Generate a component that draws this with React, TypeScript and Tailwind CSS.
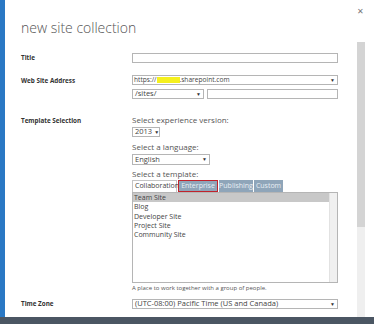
import React from "react";

const font = { fontFamily: '"Open Sans", "Noto Sans", sans-serif' };

function Caret() {
  return <span className="text-[5px] leading-none text-[#333]">▼</span>;
}

function SelectBox({ className, children }: { className: string; children: React.ReactNode }) {
  return (
    <div className={"flex items-center justify-between gap-[2px] border border-[#b5b5b5] bg-white pl-[2px] pr-[2px] " + className}>
      <span className="whitespace-nowrap text-[7.5px] leading-none text-[#444]">{children}</span>
      <Caret />
    </div>
  );
}

export default function App() {
  const templates = ["Team Site", "Blog", "Developer Site", "Project Site", "Community Site"];

  return (
    <div className="flex h-[324px] w-[374px] flex-col overflow-hidden bg-white" style={font}>
      <div className="flex flex-1">
        <div className="w-[5px] bg-[#2a78c4]" />
        <div className="flex flex-1 flex-col">
          <div className="flex h-[16px] justify-end pr-[10px] pt-[7px]">
            <span className="text-[8px] leading-none text-[#777]">✕</span>
          </div>
          <div className="flex flex-1">
            <div className="flex w-[347px] flex-col pl-[16px]">
              <h1 className="mt-[4px] text-[14px] font-light leading-[15px] text-[#555]">new site collection</h1>

              {/* Title */}
              <div className="mt-[18px] flex items-center">
                <div className="w-[111px] text-[6.3px] font-bold text-[#333]">Title</div>
                <div className="h-[10px] w-[206px] border border-[#b5b5b5]" />
              </div>

              {/* Web site address */}
              <div className="mt-[12px] flex">
                <div className="w-[111px] pt-[1px] text-[6.3px] font-bold text-[#333]">Web Site Address</div>
                <div className="flex w-[206px] flex-col gap-[4px]">
                  <div className="flex h-[10px] items-center justify-between border border-[#b5b5b5] pl-[1px] pr-[2px]">
                    <span className="flex items-center text-[6.6px] leading-none text-[#444]">
                      https://
                      <span className="inline-block h-[6px] w-[23px] bg-[#f5f01e]" />
                      .sharepoint.com
                    </span>
                    <Caret />
                  </div>
                  <div className="flex gap-[3px]">
                    <SelectBox className="h-[10px] w-[72px]">/sites/</SelectBox>
                    <div className="h-[10px] flex-1 border border-[#b5b5b5]" />
                  </div>
                </div>
              </div>

              {/* Template selection */}
              <div className="mt-[17px] flex">
                <div className="w-[111px] text-[6.3px] font-bold text-[#333]">Template Selection</div>
                <div className="flex w-[206px] flex-col text-[7px] text-[#555]">
                  <div className="text-[8px] leading-none">Select experience version:</div>
                  <SelectBox className="mt-[3px] h-[10px] w-[28px]">2013</SelectBox>
                  <div className="mt-[6px] text-[8px] leading-none">Select a language:</div>
                  <SelectBox className="mt-[3px] h-[11px] w-[78px]">English</SelectBox>
                  <div className="mt-[5px] text-[8px] leading-none">Select a template:</div>
                  <div className="mt-[2px] flex h-[12px] items-stretch">
                    <div className="flex w-[45px] items-center border border-b-0 border-[#c4c4c4] bg-white pl-[2px] text-[#444]">Collaboration</div>
                    <div className="ml-[1px] flex w-[40px] items-center justify-center border-[1.5px] border-[#c0232c] bg-[#8fa5b9] text-[#e8eef4]">Enterprise</div>
                    <div className="ml-[1px] flex w-[34px] items-center justify-center bg-[#8fa5b9] text-[#e8eef4]">Publishing</div>
                    <div className="ml-[1px] flex w-[29px] items-center justify-center bg-[#8fa5b9] text-[#e8eef4]">Custom</div>
                  </div>
                  <div className="flex h-[91px] border border-[#b5b5b5]">
                    <div className="flex flex-1 flex-col">
                      {templates.map((t, i) => (
                        <div key={t} className={"h-[9.3px] pl-[1px] leading-[9.3px] text-[#444] " + (i === 0 ? "bg-[#c8c8c8]" : "")}>
                          {t}
                        </div>
                      ))}
                    </div>
                    <div className="w-[8px] border-l border-[#e2e2e2] bg-[#f0f0f0]" />
                  </div>
                  <div className="mt-[2px] text-[6px] leading-none text-[#555]">A place to work together with a group of people.</div>
                </div>
              </div>

              {/* Time zone */}
              <div className="mt-[8px] flex items-center">
                <div className="w-[111px] text-[6.3px] font-bold text-[#333]">Time Zone</div>
                <SelectBox className="h-[10px] w-[206px]">(UTC-08:00) Pacific Time (US and Canada)</SelectBox>
              </div>
            </div>
            <div className="ml-[5px] mt-[26px] flex w-[8px] flex-col bg-[#efefef]">
              <div className="h-[185px] bg-[#d4d4d4]" />
            </div>
          </div>
        </div>
      </div>
      <div className="h-[7px] bg-[#4b5663]" />
    </div>
  );
}
